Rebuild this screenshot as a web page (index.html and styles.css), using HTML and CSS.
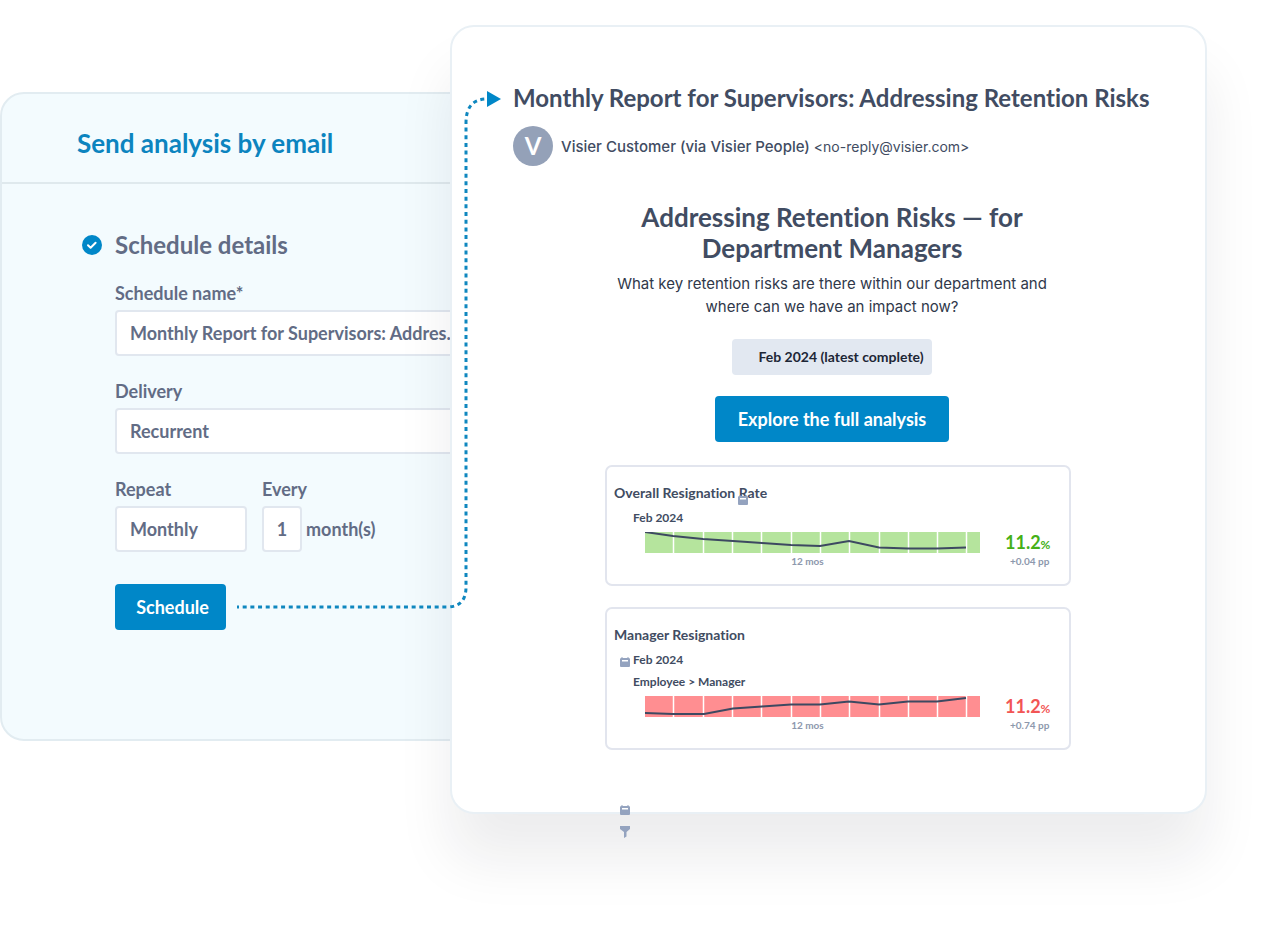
FILE: index.html
```html
<!DOCTYPE html>
<html lang="en">
<head>
    <meta charset="utf-8">
    <title>Send analysis by email</title>
    <link rel="stylesheet" href="styles.css">
</head>
<body>
    <!-- Shared icons -->
    <svg width="0" height="0" class="sprite">
        <symbol id="calendar" viewBox="0 0 10 10">
            <path fill-rule="evenodd" d="M1.500 0h1v1h5V0h1v1Q10 1 10 2.200V9q0 1-1 1H1q-1 0-1-1V2.200Q0 1 1.500 1zM2 3v1.500h6V3z"/>
        </symbol>
        <symbol id="funnel" viewBox="0 0 10 12">
            <path d="M0 0h10v3L6.500 6v4.500L4 12V6L0 3z"/>
        </symbol>
    </svg>

    <main class="scene">
        <section class="schedule">
            <header class="schedule-header">
                <h2>Send analysis by email</h2>
            </header>
            <form class="schedule-form">
                <h3>
                    <svg class="check" viewBox="0 0 20 20">
                        <circle cx="10" cy="10" r="10" fill="#0087c8"/>
                        <path d="M6 10.300l2.600 2.500 5-5" fill="none" stroke="#fff" stroke-width="2" stroke-linecap="round" stroke-linejoin="round"/>
                    </svg>
                    Schedule details
                </h3>
                <div class="field">
                    <label for="name">Schedule name*</label>
                    <input type="text" id="name" value="Monthly Report for Supervisors: Addres...">
                </div>
                <div class="field">
                    <label for="delivery">Delivery</label>
                    <select id="delivery">
                        <option>Recurrent</option>
                    </select>
                </div>
                <div class="row">
                    <div class="field repeat">
                        <label for="repeat">Repeat</label>
                        <select id="repeat">
                            <option>Monthly</option>
                        </select>
                    </div>
                    <div class="field">
                        <label for="every">Every</label>
                        <div class="every">
                            <input type="text" id="every" value="1">
                            <span>month(s)</span>
                        </div>
                    </div>
                </div>
                <button type="button" class="schedule-button">Schedule</button>
            </form>
        </section>

        <article class="email">
            <h1>Monthly Report for Supervisors: Addressing Retention Risks</h1>
            <div class="sender">
                <span class="avatar">V</span>
                <p><b>Visier Customer (via Visier People)</b> &lt;no-reply@visier.com&gt;</p>
            </div>

            <div class="content">
                <div class="intro">
                    <h2>Addressing Retention Risks — for Department Managers</h2>
                    <p>What key retention risks are there within our department and where can we have an impact now?</p>
                    <span class="period">Feb 2024 (latest complete)</span>
                    <button type="button" class="explore">Explore the full analysis</button>
                </div>

                <section class="metric good">
                    <h4>Overall Resignation Rate</h4>
                    <p class="meta">Feb 2024</p>
                    <div class="result">
                        <div class="chart">
                            <svg viewBox="0 0 335 21" preserveAspectRatio="none">
                                <rect width="335" height="21"/>
                                <path class="ticks" d="M28.500 0v21M58.500 0v21M87.500 0v21M116.500 0v21M146.500 0v21M175.500 0v21M204.500 0v21M234.500 0v21M263.500 0v21M292.500 0v21M321.500 0v21"/>
                                <path class="line" d="M0 0L28 4 58 7 88 9 117 11 146 13 175 14 204 9 234 15.500 263 16.500 292 16.500 321 15.500"/>
                            </svg>
                            <p>12 mos</p>
                        </div>
                        <div class="score">
                            <strong>11.2<small>%</small></strong>
                            <p>+0.04 pp</p>
                        </div>
                    </div>
                    <svg class="icon rate-icon"><use href="#calendar"/></svg>
                </section>

                <section class="metric bad">
                    <h4>Manager Resignation</h4>
                    <p class="meta"><svg class="icon"><use href="#calendar"/></svg>Feb 2024</p>
                    <p class="meta">Employee &gt; Manager</p>
                    <div class="result">
                        <div class="chart">
                            <svg viewBox="0 0 335 21" preserveAspectRatio="none">
                                <rect width="335" height="21"/>
                                <path class="ticks" d="M28.500 0v21M58.500 0v21M87.500 0v21M116.500 0v21M146.500 0v21M175.500 0v21M204.500 0v21M234.500 0v21M263.500 0v21M292.500 0v21M321.500 0v21"/>
                                <path class="line" d="M0 17L28 18 59 18 88 12.500 117 10.500 146 8.500 175 8.500 204 5.500 234 8.500 263 5.500 292 5.500 321 2"/>
                            </svg>
                            <p>12 mos</p>
                        </div>
                        <div class="score">
                            <strong>11.2<small>%</small></strong>
                            <p>+0.74 pp</p>
                        </div>
                    </div>
                </section>
                <div class="footer-icons">
                    <svg class="icon"><use href="#calendar"/></svg>
                    <svg class="icon funnel"><use href="#funnel"/></svg>
                </div>
            </div>
        </article>

        <!-- Dotted arrow from the Schedule button to the email title -->
        <svg class="connector" width="266" height="530" viewBox="0 0 266 530">
            <path d="M0 518H210Q229 518 229 498V34Q229 10 250 10" fill="none" stroke="#0f87bf" stroke-width="3" stroke-dasharray="4 3.680" stroke-dashoffset="2"/>
            <path d="M250 2L264 10 250 18z" fill="#0087c8"/>
        </svg>
    </main>
</body>
</html>
```

FILE: styles.css
```css
/* CSS Styling */
* {
    box-sizing: border-box;
}

body {
    margin: 0;
    background-color: white;
    color: #414c62;
    font-family: Lato, sans-serif;
    font-variant-ligatures: none;
}

h1, h2, h3, h4, p {
    margin: 0;
}

.sprite {
    position: absolute;
}

.scene {
    position: relative;
    display: flex;
    align-items: flex-start;
    padding: 25px 73px 120px 0;
}

/* Left panel */
.schedule {
    flex: 0 0 480px;
    margin: 67px -30px 0 0;
    padding-bottom: 109px;
    background-color: #f3fbfe;
    border: 2px solid #e2ecf1;
    border-radius: 24px;
    overflow: hidden;
    color: #626c85;
}

.schedule-header {
    padding: 34px 75px 24px;
    border-bottom: 2px solid #dfe9ed;
    color: #0c84bf;
}

.schedule-header h2 {
    font-size: 26px;
    line-height: 30px;
}

.schedule-form {
    padding: 46px 0 0 113px;
    font-size: 18px;
    font-weight: bold;
}

.schedule-form h3 {
    display: flex;
    align-items: center;
    gap: 13px;
    margin: 0 0 21px -33px;
    font-size: 24px;
    line-height: 30px;
}

.check {
    width: 20px;
    height: 20px;
}

.field {
    margin-bottom: 23px;
}

label {
    display: block;
    margin-bottom: 5px;
    line-height: 24px;
}

input,
select {
    display: block;
    appearance: none;
    width: 100%;
    height: 46px;
    padding: 0 13px;
    background-color: white;
    border: 2px solid #e1e7ef;
    border-radius: 4px;
    color: #626c85;
    font: inherit;
}

.row {
    display: flex;
    gap: 15px;
}

.repeat {
    width: 132px;
}

.every {
    display: flex;
    align-items: center;
    gap: 4px;
}

.every input {
    width: 40px;
    padding: 0;
    text-align: center;
}

button {
    height: 46px;
    border: none;
    border-radius: 4px;
    background-color: #0087c8;
    color: white;
    font: bold 18px Lato, sans-serif;
}

.schedule-button {
    display: block;
    margin-top: 9px;
    width: 111px;
    padding: 0 0 0 4px;
}

/* Email card */
.email {
    flex: 1;
    position: relative;
    padding: 56px 42px 41px 61px;
    background-color: white;
    border: 2px solid #e9f0f5;
    border-radius: 24px;
    box-shadow: 0 46px 56px rgba(20, 24, 36, 0.08);
}

.email h1 {
    font-size: 24px;
    line-height: 30px;
    white-space: nowrap;
}

.sender {
    display: flex;
    align-items: center;
    gap: 8px;
    margin-top: 13px;
    font-family: Inter, sans-serif;
    font-size: 14px;
}

.sender b {
    font-size: 15px;
    font-weight: 500;
}

.avatar {
    width: 40px;
    height: 40px;
    border-radius: 50%;
    background-color: #94a1b8;
    color: white;
    font: bold 24px/40px Lato, sans-serif;
    text-align: center;
}

.content {
    position: relative;
    max-width: 466px;
    margin: 36px auto 0;
}

.intro {
    display: flex;
    flex-direction: column;
    align-items: center;
    margin-bottom: 23px;
    padding-right: 12px;
    text-align: center;
}

.intro h2 {
    padding: 0 30px;
    font-size: 26px;
    line-height: 31px;
}

.intro p {
    margin: 8px 0 21px;
    color: #30384a;
    font-family: Inter, sans-serif;
    font-size: 15px;
    line-height: 23px;
}

.period {
    margin-bottom: 21px;
    padding: 0 8px 0 26px;
    border-radius: 4px;
    background-color: #e2e8f1;
    color: #1d2636;
    font-size: 14px;
    font-weight: bold;
    line-height: 36px;
}

.explore {
    padding: 0 23px;
}

/* Metric cards */
.metric {
    position: relative;
    margin-bottom: 21px;
    padding: 16px 22px 17px 7px;
    border: 2px solid #e2e5ee;
    border-radius: 7px;
}

.metric h4 {
    margin-bottom: 4px;
    font-size: 14px;
    line-height: 20px;
}

.meta {
    display: flex;
    align-items: center;
    padding-left: 19px;
    font-size: 12px;
    font-weight: bold;
    line-height: 21px;
}

.meta + .meta {
    margin-top: 1px;
}

.meta .icon {
    margin: 5px 3px 0 -13px;
}

.icon {
    width: 10px;
    height: 10px;
    fill: #94a3bf;
}

.rate-icon {
    position: absolute;
    top: 28px;
    left: 131px;
}

.result {
    display: flex;
    gap: 25px;
    margin-top: 4px;
    padding-left: 31px;
}

.chart {
    flex: 1;
    text-align: center;
}

.chart svg {
    display: block;
    width: 100%;
    height: 21px;
}

.chart p,
.score p {
    margin-top: 2px;
    color: #8d98ad;
    font-size: 10px;
    font-weight: bold;
    line-height: 12px;
}

.chart p {
    padding-right: 10px;
}

.good {
    --fill: #b5e49d;
    --text: #45b017;
}

.bad {
    --fill: #ff8e91;
    --text: #f25555;
}

.chart rect {
    fill: var(--fill);
}

.ticks {
    stroke: white;
    stroke-width: 1.5;
}

.line {
    fill: none;
    stroke: #3d4961;
    stroke-width: 2;
}

.score {
    width: 42px;
    white-space: nowrap;
}

.score strong {
    display: block;
    height: 21px;
    color: var(--text);
    font-size: 18px;
    line-height: 21px;
}

.score small {
    font-size: 12px;
    line-height: 12px;
}

.score p {
    padding-left: 5px;
}

/* Icons hanging over the bottom edge of the card */
.footer-icons {
    position: absolute;
    left: 15px;
    bottom: -88px;
    display: flex;
    flex-direction: column;
    gap: 11px;
}

.footer-icons .funnel {
    height: 12px;
}

.connector {
    position: absolute;
    top: 89px;
    left: 237px;
}
```
